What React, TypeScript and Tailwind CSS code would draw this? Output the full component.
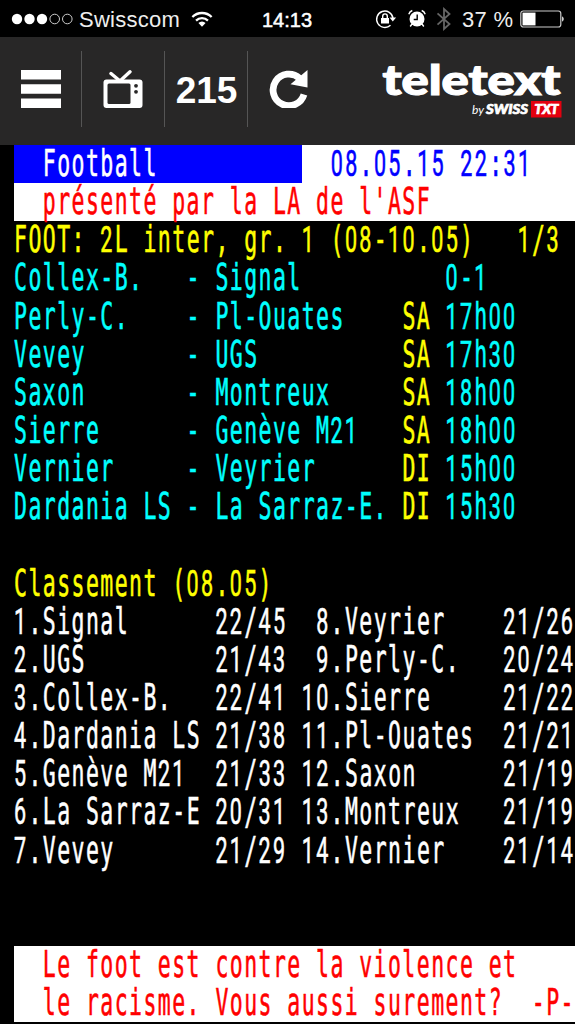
import { Fragment } from "react";

type Segment = { text: string; color?: string };

const CYAN = "text-[#00ffff]";
const YELLOW = "text-[#ffff00]";
const WHITE = "text-white";
const RED = "text-[#ff0000]";
const BLUE = "text-[#0000ff]";

const matches = [
  { home: "Collex-B.", away: "Signal", day: "", time: "0-1" },
  { home: "Perly-C.", away: "Pl-Ouates", day: "SA", time: "17h00" },
  { home: "Vevey", away: "UGS", day: "SA", time: "17h30" },
  { home: "Saxon", away: "Montreux", day: "SA", time: "18h00" },
  { home: "Sierre", away: "Genève M21", day: "SA", time: "18h00" },
  { home: "Vernier", away: "Veyrier", day: "DI", time: "15h00" },
  { home: "Dardania LS", away: "La Sarraz-E.", day: "DI", time: "15h30" },
];

const standings = [
  ["1.Signal", "22/45", " 8.Veyrier", "21/26"],
  ["2.UGS", "21/43", " 9.Perly-C.", "20/24"],
  ["3.Collex-B.", "22/41", "10.Sierre", "21/22"],
  ["4.Dardania LS", "21/38", "11.Pl-Ouates", "21/21"],
  ["5.Genève M21", "21/33", "12.Saxon", "21/19"],
  ["6.La Sarraz-E", "20/31", "13.Montreux", "21/19"],
  ["7.Vevey", "21/29", "14.Vernier", "21/14"],
];

// Digits use a plain sans so the zero has no dot, spaced to the same cell width
const Glyphs = ({ text }: { text: string }) => (
  <>
    {text.split(/(\d+)/).map((part, i) =>
      /^\d/.test(part) ? (
        <span
          key={i}
          className="font-['Roboto',sans-serif] text-[21.5px] tracking-[2.31px]"
        >
          {part}
        </span>
      ) : (
        <Fragment key={i}>{part}</Fragment>
      )
    )}
  </>
);

const Row = ({
  segments = [],
  className = "",
}: {
  segments?: Segment[];
  className?: string;
}) => (
  <div className={`h-[38.15px] ${className}`}>
    <div className="h-[22.44px] origin-top-left scale-y-170 whitespace-pre font-['DejaVu_Sans_Mono',monospace] text-[21.5px] leading-[22.44px] tracking-[1.44px] [-webkit-text-stroke:0.35px_currentColor] [font-kerning:none]">
      {segments.map((s, i) => (
        <span key={i} className={s.color}>
          <Glyphs text={s.text} />
        </span>
      ))}
    </div>
  </div>
);

const StatusBar = () => (
  <div className="flex h-[37px] items-center pl-[11px] font-['Liberation_Sans',sans-serif] text-[22px] leading-none text-white">
    <svg width="62" height="14" viewBox="0 0 62 14" fill="#fff">
      <circle cx="6" cy="7" r="5.2" />
      <circle cx="18.5" cy="7" r="5.2" />
      <circle cx="31" cy="7" r="5.2" />
      <g fill="none" stroke="#ccc">
        <circle cx="43.7" cy="7" r="4.8" />
        <circle cx="56.3" cy="7" r="4.8" />
      </g>
    </svg>
    <span className="ml-1.5 w-[101px] pt-0.5 tracking-[0.25px] text-[#eee]">Swisscom</span>
    <svg
      className="ml-2.5 mt-0.5"
      width="24"
      height="17"
      viewBox="0 0 24 18"
      fill="none"
      stroke="#fff"
      strokeWidth="2.4"
    >
      <path d="M1.8 6.4a14.3 14.3 0 0 1 20.4 0M5.7 10.2a8.8 8.8 0 0 1 12.6 0" />
      <path d="M12 16.8 8.2 12.8a5.3 5.3 0 0 1 7.6 0Z" fill="#fff" stroke="none" />
    </svg>
    <span className="ml-12 w-[51px] pt-[3px] text-[20px] [-webkit-text-stroke:0.5px_white]">
      14:13
    </span>
    <svg
      className="ml-[62px]"
      width="22"
      height="20"
      viewBox="0 0 22 20"
      fill="none"
      stroke="#fff"
      strokeWidth="1.4"
    >
      <path d="M15.5 16.2A8.2 8.2 0 1 1 18 9.3" />
      <path d="M14.5 8.6h6.6l-3.3 4Z" fill="#fff" stroke="none" />
      <path d="M6 9h8v5.5H6Z" fill="#fff" stroke="none" />
      <path d="M7.7 9V7.2a2.3 2.3 0 0 1 4.6 0V9" />
    </svg>
    <svg
      className="ml-[11px]"
      width="18"
      height="19"
      viewBox="0 0 18 19"
      fill="none"
      stroke="#fff"
      strokeWidth="1.4"
    >
      <circle cx="9" cy="10" r="7.5" fill="#fff" stroke="none" />
      <path d="M.8 5.2a6 6 0 0 1 3.5-3.7M17.2 5.2a6 6 0 0 0-3.5-3.7" />
      <path d="m4 15-1.8 2.5M14 15l1.8 2.5" />
      <path d="M9.2 5.5v5H5.7" stroke="#000" />
    </svg>
    <svg
      className="ml-[10px]"
      width="16"
      height="24"
      viewBox="0 0 16 24"
      fill="none"
      stroke="#666"
      strokeWidth="1.8"
    >
      <path d="M1.5 6.3 13.5 17 8 22V2l5.5 5L1.5 17.7" />
    </svg>
    <span className="ml-2.5 w-[52px] whitespace-nowrap pt-0.5 tracking-[0.3px] text-[#eee]">
      37 %
    </span>
    <svg className="ml-[6px]" width="45" height="18" viewBox="0 0 45 18">
      <rect
        x=".8"
        y="1"
        width="40"
        height="16"
        rx="2.5"
        fill="none"
        stroke="#ccc"
        strokeWidth="1.2"
      />
      <path d="M2.5 2.6H15.5V15.4H2.5Z" fill="#fff" />
      <path d="M42.2 6.3a3.2 3.2 0 0 1 0 5.4Z" fill="#fff" />
    </svg>
  </div>
);

const Divider = () => <div className="h-[76px] w-px bg-[#555]" />;

const Toolbar = () => (
  <div className="flex h-[108px] bg-[#282727] pt-[14px] text-white">
    <div className="flex w-[81px] justify-center">
      <svg className="mt-[19px]" width="40" height="38" viewBox="0 0 40 38" fill="#fff">
        <path d="M0 0H40V9.5H0ZM0 14.2H40V23.8H0ZM0 28.4H40V38H0Z" />
      </svg>
    </div>
    <Divider />
    <div className="flex w-[82px] justify-center">
      <svg className="mt-[19px]" width="40" height="39" viewBox="0 0 40 39">
        <path
          d="M8 3.5 17 11 27 1.8"
          fill="none"
          stroke="#fff"
          strokeWidth="3.4"
          strokeLinecap="round"
        />
        <rect x=".5" y="9.5" width="39" height="28.5" rx="3" fill="#fff" />
        <rect x="4.5" y="13.5" width="23" height="20.5" rx="1.5" fill="#282727" />
        <circle cx="33" cy="15.8" r="1.9" fill="#282727" />
        <circle cx="33" cy="21.8" r="1.9" fill="#282727" />
      </svg>
    </div>
    <Divider />
    <div className="w-[82px] pl-px pt-[19px] text-center font-['Liberation_Sans',sans-serif] text-[37px] font-bold leading-[42px]">
      215
    </div>
    <Divider />
    <svg className="ml-[21px] mt-[19px]" width="40" height="38" viewBox="0 0 40 38">
      <path
        d="M35 24.5A15.8 15.8 0 1 1 30.5 8.2"
        fill="none"
        stroke="#fff"
        strokeWidth="6.8"
      />
      <path d="M38.5 0V17.5L21.5 14.2Z" fill="#fff" />
    </svg>
    <svg
      className="ml-[73px] mt-[9px] overflow-visible"
      width="181"
      height="60"
      viewBox="0 0 181 60"
    >
      <text
        x="0.5"
        y="34.5"
        textLength="178"
        lengthAdjust="spacingAndGlyphs"
        className="fill-white stroke-white stroke-[1.2px] font-['Lato',sans-serif] text-[41.5px] font-black"
      >
        teletext
      </text>
      <text
        x="90"
        y="54"
        textLength="12"
        lengthAdjust="spacingAndGlyphs"
        className="fill-white font-['Lato',sans-serif] text-[12px] italic"
      >
        by
      </text>
      <text
        x="104"
        y="54"
        textLength="42"
        lengthAdjust="spacingAndGlyphs"
        className="fill-white stroke-white stroke-[0.7px] font-['Lato',sans-serif] text-[12.5px] font-black italic"
      >
        SWISS
      </text>
      <rect x="149" y="41" width="30.5" height="16.5" fill="#e3000f" />
      <text
        x="152.5"
        y="54"
        textLength="24"
        lengthAdjust="spacingAndGlyphs"
        className="fill-white stroke-white stroke-[0.7px] font-['Lato',sans-serif] text-[12.5px] font-black italic"
      >
        TXT
      </text>
    </svg>
  </div>
);

const App = () => {
  return (
    <div className="h-[1024px] w-[575px] overflow-hidden bg-black">
      <StatusBar />
      <Toolbar />
      <div className="ml-[14px]">
        <div className="flex bg-white">
          <Row
            className="w-[288px] bg-[#0000ff]"
            segments={[{ text: "  Football", color: WHITE }]}
          />
          <Row segments={[{ text: "  08.05.15 22:31", color: BLUE }]} />
        </div>
        <Row
          className="bg-white"
          segments={[{ text: "  présenté par la LA de l'ASF", color: RED }]}
        />
        <Row
          segments={[
            { text: "FOOT: 2L inter, gr. 1 (08-10.05)   1/3", color: YELLOW },
          ]}
        />
        {matches.map((m) => (
          <Row
            key={m.home}
            segments={[
              {
                text: `${m.home.padEnd(12)}- ${m.away.padEnd(13)}`,
                color: CYAN,
              },
              { text: m.day.padEnd(3), color: YELLOW },
              { text: m.time, color: CYAN },
            ]}
          />
        ))}
        <Row />
        <Row segments={[{ text: "Classement (08.05)", color: YELLOW }]} />
        {standings.map(([left, leftScore, right, rightScore]) => (
          <Row
            key={left}
            segments={[
              {
                text: `${left.padEnd(14)}${leftScore} ${right.padEnd(14)}${rightScore}`,
                color: WHITE,
              },
            ]}
          />
        ))}
        <Row />
        <Row />
        <Row
          className="bg-white"
          segments={[{ text: "  Le foot est contre la violence et", color: RED }]}
        />
        <Row
          className="bg-white"
          segments={[
            { text: "  le racisme. Vous aussi surement?  -P-", color: RED },
          ]}
        />
      </div>
    </div>
  );
};

export default App;
